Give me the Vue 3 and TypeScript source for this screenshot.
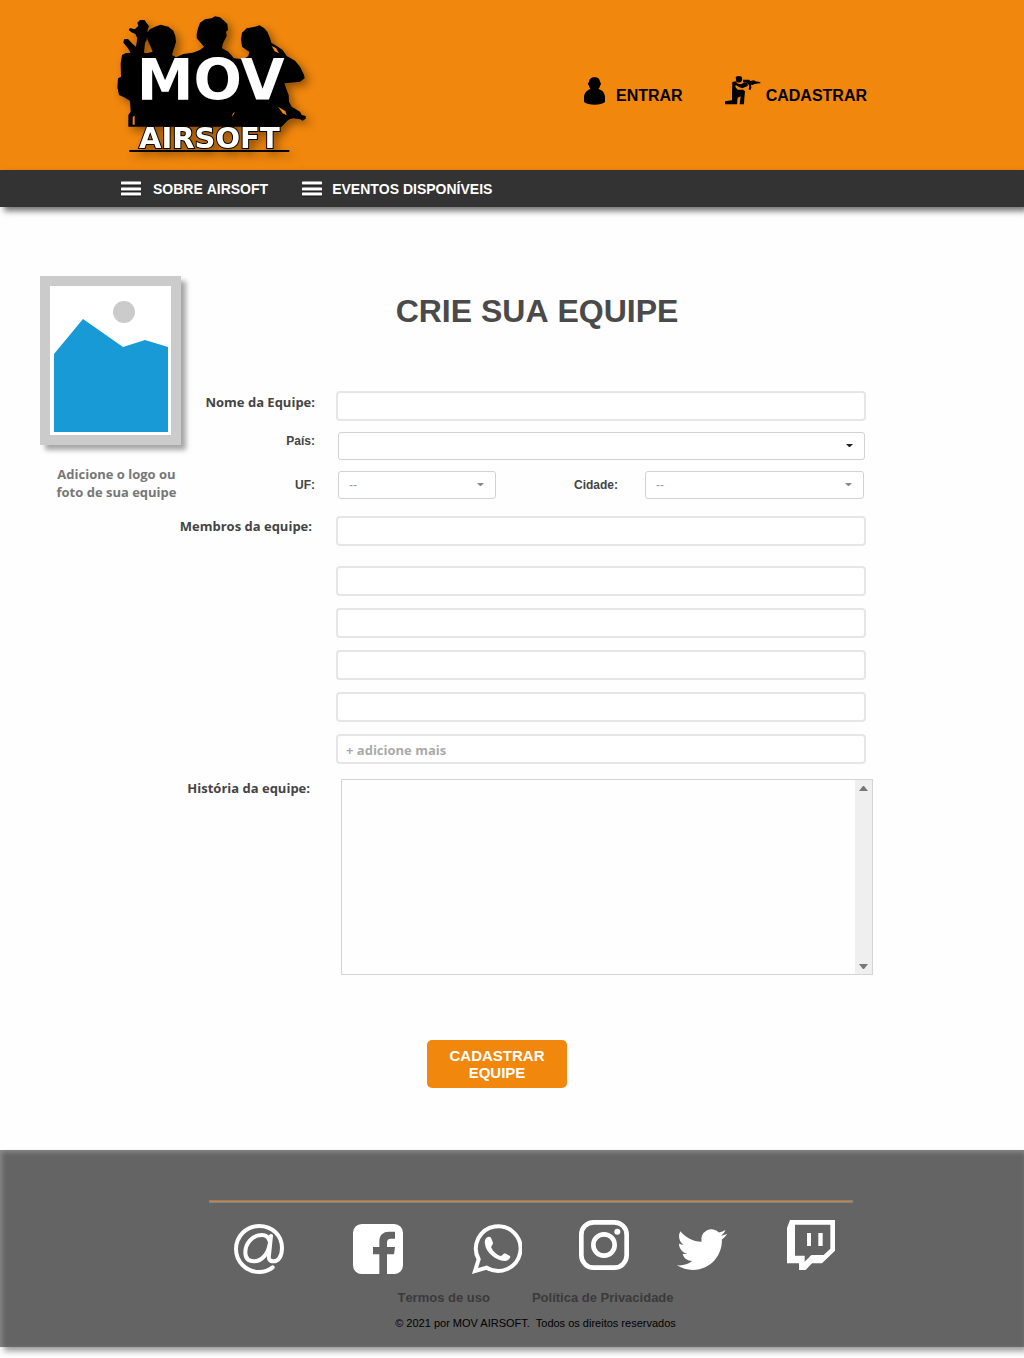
<script setup lang="ts">
import { ref } from 'vue'

interface Social {
  name: string
  low: boolean
}

const socials: Social[] = [
  { name: 'E-mail', low: true },
  { name: 'Facebook', low: true },
  { name: 'WhatsApp', low: true },
  { name: 'Instagram', low: false },
  { name: 'Twitter', low: false },
  { name: 'Twitch', low: false },
]

const menu: string[] = ['SOBRE AIRSOFT', 'EVENTOS DISPONÍVEIS']

const teamName = ref('')
const members = ref<string[]>(['', '', '', '', '', ''])
const history = ref('')
</script>

<template>
  <div class="page">
    <header class="header">
      <a class="brand" href="#" aria-label="MOV Airsoft">
        <svg class="logo" viewBox="0 0 690 510">
          <path
            d="M85 380V345L92 335L90 303L75 293L57 285L52 262L54 235L63 230L62 190L66 165L76 160L92 158L84 145L70 128L72 118L84 117L98 132L108 140L112 115L106 102L94 97L86 90L90 84L104 88L115 78L112 68L120 60L134 60L140 70L147 78L143 90L140 120L135 128L132 158L140 160L158 155L152 140L142 118L140 100L150 88L165 80L182 74L205 80L220 92L226 108L228 125L224 140L220 150L216 165L228 172L250 162L278 158L300 150L312 140L302 128L290 115L290 102L294 85L300 68L315 58L335 55L345 49L360 52L372 62L382 72L384 90L378 95L380 108L374 120L368 132L366 145L385 155L402 175L430 178L445 168L448 155L436 148L426 140L423 118L426 98L440 85L465 80L478 76L492 84L502 95L510 115L514 128L530 138L548 150L560 168L585 182L600 200L612 225L614 235L600 245L570 248L553 250L560 270L566 285L567 305L575 320L600 335L605 345L617 348L617 356L608 362L600 358L580 355L568 358L562 362L545 380Z"
          />
          <path class="slit" d="M534 320L556 333L560 346L548 340ZM395 352L399 340L405 336L400 345ZM98 350L104 348V374H98ZM515 138L528 144L537 160L524 154Z" />
          <text class="logo-main" x="332" y="300" text-anchor="middle">MOV</text>
          <text class="logo-sub" x="328" y="443" text-anchor="middle">AIRSOFT</text>
          <rect x="88" y="450" width="480" height="6" />
        </svg>
      </a>
      <nav class="account">
        <a class="account-link" href="#">
          <svg class="user-icon" viewBox="0 0 63 82">
            <path d="M32 0C42 0 48 6 48 14C52 16 52 22 48 25C47 30 45 33 43 35C56 38 63 48 63 60V74C56 80 45 82 32 82C19 82 7 80 0 74V60C0 48 8 38 20 35C18 33 16 30 15 25C11 22 11 16 15 14C15 6 22 0 32 0Z" />
          </svg>
          ENTRAR
        </a>
        <a class="account-link wide" href="#">
          <svg class="soldier-icon" viewBox="0 0 108 90">
            <path d="M32 6Q40 0 50 5L52 14L48 21Q40 25 34 20Z" />
            <path d="M22 21L32 19L38 26L49 28L58 22L68 25L68 33L52 40L42 36L32 30L31 36L38 44H54L60 49L58 70L57 88H44L47 64L38 68L36 88H0V79L21 76V56Z" />
            <path d="M54 14H72L76 18L86 16L98 21V17L101 21H106V25L88 27L84 30L78 29L79 38L76 46L71 43L73 32L66 23L54 22Z" />
          </svg>
          CADASTRAR
        </a>
      </nav>
    </header>

    <nav class="menu">
      <a v-for="item in menu" :key="item" class="menu-link" href="#">
        <svg class="bars" viewBox="0 0 20 16">
          <path class="bars-shade" d="M1 3H19M1 9H19M1 14H19" />
          <path class="bars-line" d="M1 2H19M1 8H19M1 13H19" />
        </svg>
        {{ item }}
      </a>
    </nav>

    <main class="main">
      <aside class="photo">
        <button class="photo-frame" type="button" aria-label="Adicionar foto">
          <svg class="photo-art" viewBox="0 0 121 149">
            <circle cx="74" cy="26" r="11" fill="#cbcbcb" />
            <path d="M4 68L33 33L73 61L95 54L118 61V146H4Z" fill="#189ad6" />
          </svg>
        </button>
        <p class="photo-text">Adicione o logo ou<br />foto de sua equipe</p>
      </aside>

      <form class="form" @submit.prevent>
        <h1 class="title">CRIE SUA EQUIPE</h1>

        <div class="row row-name">
          <label class="label" for="team">Nome da Equipe:</label>
          <input id="team" v-model="teamName" class="input" type="text" />
        </div>
        <div class="row row-country">
          <label class="label small" for="country">País:</label>
          <select id="country" class="select dark">
            <option></option>
          </select>
        </div>
        <div class="row row-place">
          <label class="label small" for="uf">UF:</label>
          <select id="uf" class="select uf">
            <option>--</option>
          </select>
          <label class="label small city-label" for="city">Cidade:</label>
          <select id="city" class="select">
            <option>--</option>
          </select>
        </div>
        <div class="row row-members">
          <label class="label" for="member-0">Membros da equipe:</label>
          <div class="members">
            <input
              v-for="(_, i) in members"
              :id="`member-${i}`"
              :key="i"
              v-model="members[i]"
              class="input"
              type="text"
              :aria-label="`Membro ${i + 1}`"
              :placeholder="i === members.length - 1 ? '+ adicione mais' : ''"
            />
          </div>
        </div>
        <div class="row row-history">
          <label class="label" for="history">História da equipe:</label>
          <div class="history-box">
            <textarea id="history" v-model="history" class="history"></textarea>
            <div class="track" aria-hidden="true">
              <svg class="arrow" viewBox="0 0 9 5"><path d="M0 5L4 0H5L9 5Z" /></svg>
              <svg class="arrow" viewBox="0 0 9 5"><path d="M0 0L4 5H5L9 0Z" /></svg>
            </div>
          </div>
        </div>

        <div class="actions">
          <button class="submit" type="submit">CADASTRAR<br />EQUIPE</button>
        </div>
      </form>
    </main>

    <footer class="footer">
      <div class="footer-inner">
        <hr class="rule" />
        <div class="socials">
          <a v-for="s in socials" :key="s.name" class="social" :class="{ low: s.low }" href="#" :aria-label="s.name">
            <svg v-if="s.name === 'E-mail'" class="icon" viewBox="0 0 150 150">
              <g fill="none" stroke="#fff" stroke-width="12" stroke-linecap="round" stroke-linejoin="round">
                <path d="M116 130C105 139 90 144 75 144A69 69 0 0 1 6 75A69 69 0 0 1 75 6C115 6 144 34 144 72C144 97 133 112 118 112C106 112 103 104 105 92L111 36" />
                <path d="M107 52C104 38 94 33 83 33C55 33 34 58 34 85C34 103 44 112 60 112C84 112 103 88 107 60" />
              </g>
            </svg>
            <svg v-else-if="s.name === 'Facebook'" class="icon" viewBox="0 0 150 150">
              <path fill-rule="evenodd" d="M26 0H124A26 26 0 0 1 150 26V124A26 26 0 0 1 124 150H102V91H123L126 69H102V56C102 48 105 44 114 44H126V23H108C90 23 79 33 79 52V69H60V91H79V150H26A26 26 0 0 1 0 124V26A26 26 0 0 1 26 0Z" />
            </svg>
            <svg v-else-if="s.name === 'WhatsApp'" class="icon" viewBox="0 0 150 150">
              <path fill="none" stroke="#fff" stroke-width="12" d="M20 106A67 67 0 1 1 44 131L9 141Z" />
              <path d="M41 44C45 37 53 36 57 41L63 56C64 62 56 66 58 71C63 82 74 92 85 96C91 97 94 88 99 88L114 96C117 101 109 111 98 111C70 109 41 85 39 60C38 54 38 49 41 44Z" />
            </svg>
            <svg v-else-if="s.name === 'Instagram'" class="icon" viewBox="0 0 150 150">
              <rect x="7" y="7" width="136" height="136" rx="37" fill="none" stroke="#fff" stroke-width="14" />
              <circle cx="75" cy="75" r="32" fill="none" stroke="#fff" stroke-width="14" />
              <circle cx="115" cy="35" r="9" />
            </svg>
            <svg v-else-if="s.name === 'Twitter'" class="icon" viewBox="0 -2.2 24 24">
              <path d="M23.953 4.57a10 10 0 01-2.825.775 4.958 4.958 0 002.163-2.723c-.951.555-2.005.959-3.127 1.184a4.92 4.92 0 00-8.384 4.482C7.69 8.095 4.067 6.13 1.64 3.162a4.822 4.822 0 00-.666 2.475c0 1.71.87 3.213 2.188 4.096a4.904 4.904 0 01-2.228-.616v.06a4.923 4.923 0 003.946 4.827 4.996 4.996 0 01-2.212.085 4.936 4.936 0 004.604 3.417 9.867 9.867 0 01-6.102 2.105c-.39 0-.779-.023-1.17-.067a13.995 13.995 0 007.557 2.209c9.053 0 13.998-7.496 13.998-13.985 0-.21 0-.42-.015-.63A9.935 9.935 0 0024 4.59z" />
            </svg>
            <svg v-else class="icon" viewBox="0 0 150 150">
              <path fill-rule="evenodd" d="M9 0H144V92L105 130H75L56 150H36V130H0V24ZM24 14V107H53V125L73 105H110L130 86V14ZM60 39H72V78H60ZM94 39H107V78H94Z" />
            </svg>
          </a>
        </div>
        <div class="legal">
          <div class="legal-links">
            <a class="legal-link" href="#">Termos de uso</a>
            <a class="legal-link" href="#">Política de Privacidade</a>
          </div>
          <p class="copyright">© 2021 por MOV AIRSOFT.&nbsp; Todos os direitos reservados</p>
        </div>
      </div>
    </footer>
  </div>
</template>

<style>
body {
  margin: 0;
  background: #fefefe;
}
</style>

<style scoped>
.page {
  font-family: "Liberation Sans", Arial, sans-serif;
  color: #444;
  padding-bottom: 11px;
  overflow: hidden;
}
.page *,
.page *::before {
  box-sizing: border-box;
}
a {
  text-decoration: none;
}

.header {
  display: flex;
  justify-content: space-between;
  height: 170px;
  padding: 0 157px 0 100px;
  background: #f1870d;
}
.brand {
  display: block;
  height: 170px;
}
.logo {
  display: block;
  width: 230px;
  height: 170px;
  filter: drop-shadow(4px 4px 4px rgba(0, 0, 0, 0.4));
}
.slit {
  fill: #f1870d;
}
.logo-main,
.logo-sub {
  font-family: "DejaVu Sans", sans-serif;
  font-weight: bold;
  fill: #fff;
}
.logo-main {
  font-size: 171px;
}
.logo-sub {
  font-size: 87px;
  stroke: #000;
  stroke-width: 6px;
  paint-order: stroke;
}
.account {
  display: flex;
  align-items: flex-start;
  gap: 42px;
  padding-top: 76px;
}
.account-link {
  display: flex;
  align-items: flex-end;
  gap: 11px;
  height: 29px;
  font-size: 16px;
  font-weight: bold;
  line-height: 18px;
  color: #000;
}
.account-link.wide {
  gap: 5px;
}
.user-icon {
  width: 21px;
  height: 28px;
}
.soldier-icon {
  width: 36px;
  height: 30px;
}

.menu {
  display: flex;
  gap: 34px;
  align-items: center;
  height: 37px;
  padding-left: 121px;
  background: #333;
  box-shadow: 4px 4px 6px rgba(0, 0, 0, 0.55);
}
.menu-link {
  display: flex;
  align-items: center;
  gap: 12px;
  font-size: 14px;
  font-weight: bold;
  font-kerning: none;
  line-height: 18px;
  color: #fff;
}
.menu-link + .menu-link {
  gap: 10px;
}
.bars {
  width: 20px;
  height: 16px;
  fill: none;
  stroke-linecap: round;
}
.bars-shade {
  stroke: #111;
  stroke-width: 3px;
}
.bars-line {
  stroke: #fff;
  stroke-width: 3px;
}

.main {
  display: flex;
  align-items: flex-start;
  padding: 69px 151px 62px 40px;
}
.photo {
  flex: none;
  width: 141px;
}
.photo-frame {
  display: block;
  width: 141px;
  height: 169px;
  padding: 0;
  border: 10px solid #cbcbcb;
  background: #fff;
  box-shadow: 5px 5px 5px rgba(0, 0, 0, 0.35);
}
.photo-art {
  display: block;
  width: 121px;
  height: 149px;
}
.photo-text {
  margin: 20px 0 0;
  padding-left: 12px;
  font-family: "Open Sans", sans-serif;
  font-size: 13px;
  font-weight: bold;
  line-height: 18px;
  text-align: center;
  white-space: nowrap;
  color: #777;
}

.form {
  flex: 1;
  min-width: 0;
}
.title {
  margin: 17px 0 62px;
  padding-left: 20px;
  font-size: 32px;
  font-weight: bold;
  font-kerning: none;
  line-height: 36px;
  text-align: center;
  color: #4a4a4a;
}
.row {
  display: flex;
  align-items: flex-start;
  gap: 21px;
  padding-right: 7px;
}
.label {
  display: flex;
  flex: none;
  justify-content: flex-end;
  width: 134px;
  font-family: "Open Sans", sans-serif;
  font-size: 13px;
  font-weight: bold;
  line-height: 18px;
  white-space: nowrap;
  color: #444;
}
.label.small {
  font-family: "Liberation Sans", Arial, sans-serif;
  font-size: 12px;
}
.row-name .label {
  padding-top: 2px;
}
.row-country {
  gap: 23px;
  margin-top: 11px;
  padding-right: 8px;
}
.row-place {
  gap: 23px;
  margin-top: 11px;
  padding-right: 9px;
}
.row-place .label {
  padding-top: 5px;
}
.row-members {
  gap: 24px;
  margin-top: 17px;
}
.row-members .label {
  width: 131px;
  padding-top: 1px;
}
.row-history {
  gap: 31px;
  margin-top: 15px;
  padding-right: 0;
}
.row-history .label {
  width: 129px;
}
.row-place .city-label {
  width: 99px;
}
.row-place .city-label + .select {
  margin-left: 4px;
}

.input {
  flex: 1;
  display: block;
  width: 100%;
  min-width: 0;
  height: 30px;
  padding: 2px 8px 0;
  border: 2px solid #e6e6e6;
  border-radius: 4px;
  background: #fff;
  font-family: "Open Sans", sans-serif;
  font-size: 13px;
  font-weight: bold;
  color: #444;
}
.input::placeholder {
  color: #aaa;
  opacity: 1;
}
.members {
  flex: 1;
  display: flex;
  flex-direction: column;
  gap: 12px;
}
.members .input {
  flex: none;
}
.members .input:first-child {
  margin-bottom: 8px;
}
.select {
  flex: 1;
  min-width: 0;
  height: 28px;
  padding: 0 10px;
  border: 1px solid #d2d2d2;
  border-radius: 3px;
  appearance: none;
  background: #fff url("data:image/svg+xml,%3Csvg xmlns='http://www.w3.org/2000/svg' width='7' height='4'%3E%3Cpath d='M0 0H7L4 3H3Z' fill='%23888'/%3E%3C/svg%3E") no-repeat right 11px center;
  font-family: "Liberation Sans", Arial, sans-serif;
  font-size: 12px;
  color: #999;
}
.select.dark {
  background-image: url("data:image/svg+xml,%3Csvg xmlns='http://www.w3.org/2000/svg' width='7' height='4'%3E%3Cpath d='M0 0H7L4 3H3Z' fill='%23222'/%3E%3C/svg%3E");
}
.select.uf {
  flex: none;
  width: 158px;
}
.history-box {
  flex: 1;
  display: flex;
  height: 196px;
  border: 1px solid #d4d4d4;
}
.history {
  flex: 1;
  min-width: 0;
  padding: 6px;
  border: 0;
  resize: none;
  scrollbar-width: none;
  background: #fefefe;
  font-family: "Open Sans", sans-serif;
  font-size: 13px;
}
.track {
  display: flex;
  flex-direction: column;
  justify-content: space-between;
  align-items: center;
  width: 17px;
  padding: 6px 0 5px;
  background: #efefef;
}
.arrow {
  width: 9px;
  height: 5px;
  fill: #777;
}
.actions {
  display: flex;
  justify-content: center;
  padding: 65px 60px 0 0;
}
.submit {
  width: 140px;
  height: 48px;
  padding: 0;
  border: 0;
  border-radius: 5px;
  background: #f1870d;
  font-family: "Liberation Sans", Arial, sans-serif;
  font-size: 15px;
  font-weight: bold;
  line-height: 17px;
  color: #fff;
}

.footer {
  padding: 50px 171px 0 209px;
  height: 197px;
  background: #646464;
  box-shadow: 4px 4px 6px rgba(0, 0, 0, 0.4), inset 2px 2px 5px rgba(255, 255, 255, 0.25);
}
.rule {
  height: 3px;
  margin: 0;
  border: 1px solid #828282;
  background: #d98324;
}
.socials {
  display: grid;
  grid-template-columns: 119fr 119fr 107fr 98fr 110fr 48fr;
  padding: 17px 18px 0 25px;
}
.social {
  min-width: 0;
}
.social.low {
  padding-top: 4px;
}
.icon {
  display: block;
  width: 50px;
  height: 50px;
  fill: #fff;
}
.legal {
  display: flex;
  flex-direction: column;
  align-items: center;
  padding: 15px 0 0 9px;
}
.legal-links {
  display: flex;
  gap: 42px;
}
.legal-link {
  font-size: 13px;
  font-weight: bold;
  font-kerning: none;
  line-height: 18px;
  color: #3a3a3a;
}
.copyright {
  margin: 7px 0 0;
  font-size: 11px;
  line-height: 18px;
  color: #000;
}
</style>
